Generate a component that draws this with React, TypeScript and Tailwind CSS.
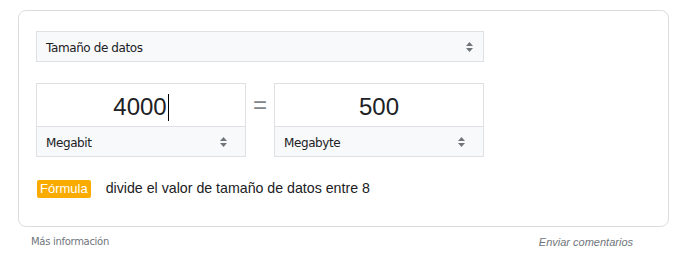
import React from "react";

const Arrows = () => (
  <svg width="9" height="12" viewBox="0 0 9 12" className="shrink-0">
    <path d="M4.5 1 L8 5 H1 Z" fill="#70757a" />
    <path d="M4.5 11 L8 7 H1 Z" fill="#70757a" />
  </svg>
);

const UnitBox = ({
  value,
  unit,
  caret,
}: {
  value: string;
  unit: string;
  caret?: boolean;
}) => (
  <div className="w-[210px] border border-[#dfe1e5] bg-white">
    <div className="flex h-[42px] items-center justify-center pt-[4px] font-['Liberation_Sans',Arial,sans-serif] text-[24px] text-[#202124]">
      <span>{value}</span>
      {caret && <span className="ml-px inline-block h-[27px] w-px bg-black" />}
    </div>
    <div className="flex h-[30px] items-center justify-between border-t border-[#dfe1e5] bg-[#f8f9fa] pl-[9px] pr-[17px] font-['DejaVu_Sans',Verdana,sans-serif] text-[12px] tracking-[-0.4px] text-[#202124]">
      <span className="pt-[3px]">{unit}</span>
      <Arrows />
    </div>
  </div>
);

export default function App() {
  return (
    <div className="h-[263px] w-[691px] bg-white pt-[10px] pl-[18px] pr-[22px]">
      <div className="h-[217px] rounded-[8px] border border-[#dadce0] px-[17px] pt-[20px]">
        <div className="flex h-[31px] w-[448px] items-center justify-between border border-[#dfe1e5] bg-[#f8f9fa] pl-[9px] pr-[9px] font-['DejaVu_Sans',Verdana,sans-serif] text-[12px] tracking-[-0.4px] text-[#202124]">
          <span className="pt-[2px]">Tamaño de datos</span>
          <Arrows />
        </div>

        <div className="mt-[21px] flex items-start">
          <UnitBox value="4000" unit="Megabit" caret />
          <div className="flex h-[42px] w-[28px] items-center justify-center pt-[2px] font-['Liberation_Sans',Arial,sans-serif] text-[24px] text-[#80868b]">
            =
          </div>
          <UnitBox value="500" unit="Megabyte" />
        </div>

        <div className="mt-[21px] flex items-center font-['Liberation_Sans',Arial,sans-serif]">
          <span className="ml-px rounded-[2px] bg-[#f9ab00] px-[3px] text-[13px] leading-[18px] text-white">
            Fórmula
          </span>
          <span className="ml-[15px] text-[14.2px] text-[#202124]">
            divide el valor de tamaño de datos entre 8
          </span>
        </div>
      </div>

      <div className="mt-[7px] flex justify-between pl-[13px] pr-[36px] text-[#70757a]">
        <span className="font-['DejaVu_Sans',Verdana,sans-serif] text-[10px] tracking-[-0.3px]">Más información</span>
        <span className="font-['Liberation_Sans',Arial,sans-serif] text-[11px] italic">
          Enviar comentarios
        </span>
      </div>
    </div>
  );
}
